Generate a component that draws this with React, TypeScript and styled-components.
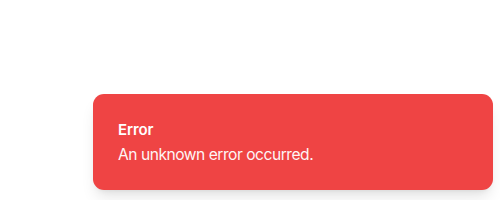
import React from 'react';
import styled, { createGlobalStyle } from 'styled-components';

const GlobalStyle = createGlobalStyle`
  html, body {
    margin: 0;
    padding: 0;
    background: #ffffff;
    font-family: 'Inter', 'Liberation Sans', sans-serif;
    -webkit-font-smoothing: antialiased;
  }
`;

const Viewport = styled.div`
  height: 200px;
  display: flex;
  justify-content: flex-end;
  align-items: flex-end;
  padding: 0 7px 10px 0;
  box-sizing: border-box;
`;

const Toast = styled.div`
  width: 400px;
  box-sizing: border-box;
  padding: 24px 25px 23px;
  background: #ef4444;
  border-radius: 11px;
  color: #ffffff;
  display: flex;
  flex-direction: column;
  gap: 1px;
  box-shadow: 0 10px 15px -3px rgba(0, 0, 0, 0.1), 0 4px 6px -4px rgba(0, 0, 0, 0.1);
`;

const Title = styled.div`
  font-size: 15px;
  line-height: 24px;
  font-weight: 600;
  letter-spacing: -0.1px;
`;

const Description = styled.div`
  font-size: 15.6px;
  line-height: 24px;
  font-weight: 400;
  letter-spacing: -0.48px;
  opacity: 0.95;
`;

const App: React.FC = () => {
  return (
    <>
      <GlobalStyle />
      <Viewport>
        <Toast role="alert">
          <Title>Error</Title>
          <Description>An unknown error occurred.</Description>
        </Toast>
      </Viewport>
    </>
  );
};

export default App;
